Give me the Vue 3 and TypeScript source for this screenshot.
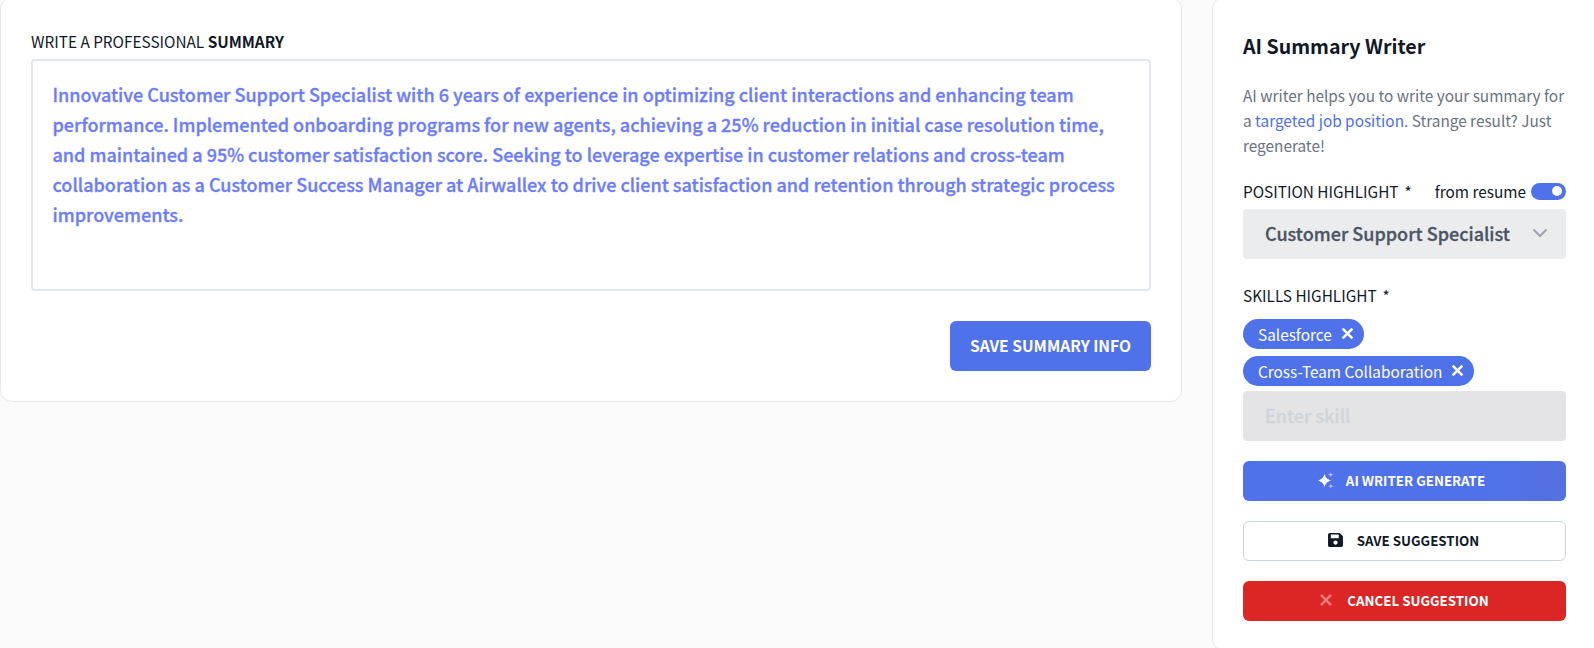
<script setup lang="ts">
const summary =
  'Innovative Customer Support Specialist with 6 years of experience in optimizing client interactions and enhancing team performance. Implemented onboarding programs for new agents, achieving a 25% reduction in initial case resolution time, and maintained a 95% customer satisfaction score. Seeking to leverage expertise in customer relations and cross-team collaboration as a Customer Success Manager at Airwallex to drive client satisfaction and retention through strategic process improvements.'

const skills = ['Salesforce', 'Cross-Team Collaboration']
</script>

<template>
  <div class="page">
    <main class="card">
      <div class="field-label">WRITE A PROFESSIONAL <b>SUMMARY</b></div>
      <div class="summary-box">{{ summary }}</div>
      <div class="card-actions">
        <button class="btn-save-info" type="button">SAVE SUMMARY INFO</button>
      </div>
    </main>

    <aside class="writer">
      <h2 class="writer-title">AI Summary Writer</h2>
      <p class="writer-desc">
        AI writer helps you to write your summary for a
        <span class="link">targeted job position</span>. Strange result? Just regenerate!
      </p>

      <div class="label-row">
        <span class="label">POSITION HIGHLIGHT<i class="req">*</i></span>
        <span class="from-resume">
          from resume
          <span class="toggle"><span class="knob"></span></span>
        </span>
      </div>
      <div class="select">
        <span>Customer Support Specialist</span>
        <svg class="chevron" width="16" height="16" viewBox="0 0 16 16" fill="none">
          <path d="M1.500 4.500L8 11l6.500-6.500" stroke="#9ca3af" stroke-width="2" />
        </svg>
      </div>

      <div class="label skills-label">SKILLS HIGHLIGHT<i class="req">*</i></div>
      <div class="chips">
        <span v-for="s in skills" :key="s" class="chip">
          {{ s }}
          <svg width="13" height="13" viewBox="0 0 12 12" fill="none">
            <path d="M1.500 1.500l9 9M10.500 1.500l-9 9" stroke="#fff" stroke-width="2.400" />
          </svg>
        </span>
      </div>
      <div class="skill-input">Enter skill</div>

      <button class="action action-generate" type="button">
        <svg width="16" height="17" viewBox="0 0 16 17">
          <path d="M6.500 2C7.500 5.500 8.800 7 13 8.500 8.800 10 7.500 11.500 6.500 15 5.500 11.500 4.200 10 0 8.500 4.200 7 5.500 5.500 6.500 2Z" fill="#fff" />
          <path d="M12.800 0C13 1.700 13.600 2.300 15.800 2.700 13.600 3.100 13 3.700 12.800 5.400 12.600 3.700 12 3.100 9.800 2.700 12 2.300 12.600 1.700 12.800 0Z" fill="#fff" opacity=".55" />
          <path d="M12.800 11.600C13 13.300 13.600 13.900 15.800 14.300 13.600 14.700 13 15.300 12.800 17 12.600 15.300 12 14.700 9.800 14.300 12 13.900 12.600 13.300 12.800 11.600Z" fill="#fff" opacity=".55" />
        </svg>
        AI WRITER GENERATE
      </button>
      <button class="action action-outline" type="button">
        <svg width="15" height="14" viewBox="0 0 16 15">
          <path fill-rule="evenodd" fill="#111827" d="M2 0h10.500L16 3.500V13a2 2 0 0 1-2 2H2a2 2 0 0 1-2-2V2a2 2 0 0 1 2-2ZM3 1.500V5.500H11.500V1.500ZM8 8a2.300 2.300 0 1 0 0 4.600A2.300 2.300 0 0 0 8 8Z" />
        </svg>
        SAVE SUGGESTION
      </button>
      <button class="action action-cancel" type="button">
        <svg width="12" height="12" viewBox="0 0 13 13" fill="none">
          <path d="M1 1l11 11M12 1L1 12" stroke="#fff" stroke-opacity=".4" stroke-width="2.600" />
        </svg>
        CANCEL SUGGESTION
      </button>
    </aside>
  </div>
</template>

<style>
html,
body {
  margin: 0;
  background: #fafafa;
  overflow: hidden;
}
</style>

<style scoped>
.page {
  display: flex;
  align-items: flex-start;
  gap: 30px;
  height: 648px;
  overflow: hidden;
  font-family: 'Noto Sans CJK SC', 'Noto Sans', sans-serif;
  color: #111827;
}

.card {
  box-sizing: border-box;
  flex: 0 0 1182px;
  height: 405px;
  margin-top: -3px;
  padding: 32px 30px 30px;
  background: #fff;
  border: 1px solid #e5e7eb;
  border-radius: 12px;
}

.field-label {
  font-size: 15.350px;
  line-height: 22px;
  margin-bottom: 7px;
}

.field-label b {
  font-weight: 700;
}

.summary-box {
  box-sizing: border-box;
  height: 232px;
  padding: 18px 20px 18px 19.500px;
  border: 2px solid #e2e8f0;
  border-radius: 4px;
  font-size: 18px;
  font-weight: 500;
  line-height: 30px;
  color: #6b7cff;
  -webkit-text-stroke: 0.3px #6b7cff;
}

.card-actions {
  display: flex;
  justify-content: flex-end;
  margin-top: 30px;
}

.btn-save-info {
  width: 201px;
  height: 50px;
  padding: 0 0 3px;
  border: 0;
  border-radius: 6px;
  background: #4f72ea;
  color: #fff;
  font: 700 15.600px 'Noto Sans CJK SC', sans-serif;
}

.writer {
  box-sizing: border-box;
  flex: 0 0 394px;
  height: 654px;
  margin-top: -3px;
  padding: 33px 39px 0 30px;
  background: #fff;
  border: 1px solid #e2e8f0;
  border-radius: 12px;
}

.writer-title {
  margin: 0;
  font-size: 19.600px;
  font-weight: 600;
  line-height: 30px;
}

.writer-desc {
  margin: 22px 0 0;
  font-size: 15.350px;
  line-height: 25px;
  color: #6b7280;
}

.link {
  color: #4f6fe8;
}

.label-row {
  display: flex;
  justify-content: space-between;
  align-items: center;
  margin-top: 21px;
  height: 24px;
}

.label {
  font-size: 15.350px;
  line-height: 24px;
}

.req {
  font-style: normal;
  margin-left: 6px;
}

.from-resume {
  display: flex;
  align-items: center;
  gap: 5px;
  font-size: 15.350px;
}

.toggle {
  display: flex;
  align-items: center;
  justify-content: flex-end;
  box-sizing: border-box;
  width: 35px;
  height: 17px;
  padding-right: 4px;
  border-radius: 9px;
  background: #4f72ea;
}

.knob {
  width: 10px;
  height: 10px;
  border-radius: 50%;
  background: #fff;
}

.select {
  display: flex;
  align-items: center;
  justify-content: space-between;
  box-sizing: border-box;
  height: 50px;
  margin-top: 6px;
  padding: 0 18px 2px 22px;
  border-radius: 4px;
  background: #ebecee;
  font-size: 18px;
  font-weight: 500;
  color: #4b5563;
  -webkit-text-stroke: 0.3px #4b5563;
}

.skills-label {
  margin-top: 24px;
}

.chips {
  display: flex;
  flex-direction: column;
  align-items: flex-start;
  gap: 7px;
  margin-top: 12px;
}

.chip {
  display: flex;
  align-items: center;
  gap: 9px;
  box-sizing: border-box;
  height: 30px;
  padding: 0 10px 1px 15px;
  border-radius: 15px;
  background: #4f72ea;
  color: #fff;
  font-size: 15.350px;
}

.skill-input {
  box-sizing: border-box;
  height: 50px;
  margin-top: 5px;
  padding: 0 22px;
  border-radius: 4px;
  background: #e4e4e6;
  color: #d1d5db;
  font-size: 18px;
  font-weight: 500;
  line-height: 48px;
  -webkit-text-stroke: 0.3px #d1d5db;
}

.action {
  display: flex;
  align-items: center;
  justify-content: center;
  gap: 12px;
  box-sizing: border-box;
  width: 100%;
  height: 40px;
  padding: 0 0 2px;
  border-radius: 6px;
  font: 700 13.330px 'Noto Sans CJK SC', sans-serif;
}

.action-generate {
  margin-top: 20px;
  padding-right: 6px;
  border: 0;
  background: linear-gradient(90deg, #4f72ea 75%, #5570e0);
  color: #fff;
}

.action-outline {
  margin-top: 20px;
  padding-right: 2px;
  border: 1px solid #cbd5e1;
  background: #fff;
  color: #111827;
  gap: 14px;
}

.action-cancel {
  margin-top: 20px;
  border: 0;
  background: #dc2626;
  color: #fff;
  gap: 15px;
}
</style>
